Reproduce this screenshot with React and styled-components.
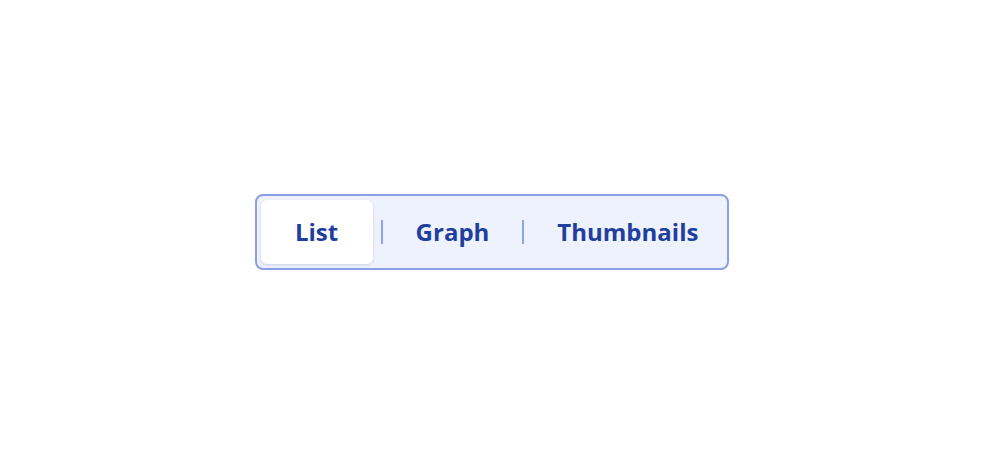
import React, { useState } from "react";
import styled, { createGlobalStyle } from "styled-components";

const Global = createGlobalStyle`
  html, body { margin: 0; padding: 0; background: #ffffff; }
  body { font-family: "Open Sans", "Noto Sans", sans-serif; }
`;

const Page = styled.div`
  width: 984px;
  height: 464px;
  display: flex;
  align-items: center;
  justify-content: center;
`;

const Group = styled.div`
  display: flex;
  align-items: center;
  padding: 4px;
  background: #eef2fd;
  border: 2px solid #8a9fe6;
  border-radius: 8px;
`;

const Tab = styled.button`
  height: 64px;
  min-width: 112px;
  padding: 0 25px;
  border: none;
  border-radius: 6px;
  background: ${(p) => (p.$active ? "#ffffff" : "transparent")};
  box-shadow: ${(p) =>
    p.$active ? "0 1px 3px rgba(40, 60, 140, 0.18)" : "none"};
  font-family: "Open Sans", "Noto Sans", sans-serif;
  font-weight: 700;
  font-size: 24px;
  line-height: 1;
  color: #1f3f9f;
  cursor: pointer;
`;

const Sep = styled.span`
  width: 2px;
  height: 24px;
  margin: 0 8px;
  background: #8ea3e8;
`;

const tabs = ["List", "Graph", "Thumbnails"];

export default function App() {
  const [active, setActive] = useState(0);
  return (
    <>
      <Global />
      <Page>
        <Group>
          {tabs.map((t, i) => (
            <React.Fragment key={t}>
              {i > 0 && <Sep />}
              <Tab $active={active === i} onClick={() => setActive(i)}>
                {t}
              </Tab>
            </React.Fragment>
          ))}
        </Group>
      </Page>
    </>
  );
}
